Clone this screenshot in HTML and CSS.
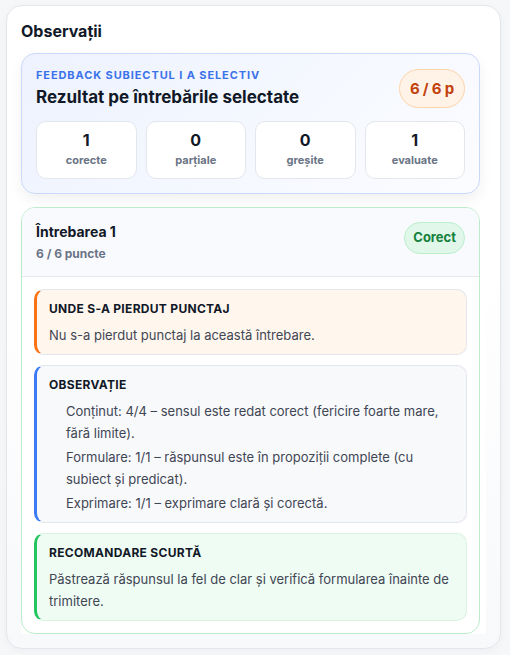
FILE: index.html
```html
<!DOCTYPE html>
<html lang="ro">
<head>
  <meta charset="UTF-8">
  <meta name="viewport" content="width=device-width, initial-scale=1.0">
  <title>Observații</title>
  <link rel="stylesheet" href="styles.css">
</head>
<body>
  <div class="card">
    <h2 class="card-title">Observații</h2>

    <div class="feed">
      <!-- rezumat -->
      <div class="summary">
        <div class="summary-head">
          <div>
            <div class="eyebrow">FEEDBACK SUBIECTUL I A SELECTIV</div>
            <div class="summary-title">Rezultat pe întrebările selectate</div>
          </div>
          <span class="pill pill-orange">6 / 6 p</span>
        </div>
        <div class="stats">
          <div class="stat"><div class="stat-num">1</div><div class="stat-label">corecte</div></div>
          <div class="stat"><div class="stat-num">0</div><div class="stat-label">parțiale</div></div>
          <div class="stat"><div class="stat-num">0</div><div class="stat-label">greșite</div></div>
          <div class="stat"><div class="stat-num">1</div><div class="stat-label">evaluate</div></div>
        </div>
      </div>

      <!-- intrebarea 1 -->
      <div class="question">
        <div class="question-head">
          <div>
            <div class="question-title">Întrebarea 1</div>
            <div class="question-score">6 / 6 puncte</div>
          </div>
          <span class="pill pill-green">Corect</span>
        </div>
        <div class="question-body">
          <div class="note note-orange">
            <div class="note-title">UNDE S-A PIERDUT PUNCTAJ</div>
            <p class="note-text">Nu s-a pierdut punctaj la această întrebare.</p>
          </div>
          <div class="note note-blue">
            <div class="note-title">OBSERVAȚIE</div>
            <ul class="note-list">
              <li>Conținut: 4/4 – sensul este redat corect (fericire foarte mare, fără limite).</li>
              <li>Formulare: 1/1 – răspunsul este în propoziții complete (cu subiect și predicat).</li>
              <li>Exprimare: 1/1 – exprimare clară și corectă.</li>
            </ul>
          </div>
          <div class="note note-green">
            <div class="note-title">RECOMANDARE SCURTĂ</div>
            <p class="note-text">Păstrează răspunsul la fel de clar și verifică formularea înainte de trimitere.</p>
          </div>
        </div>
      </div>
    </div>
  </div>
</body>
</html>
```

FILE: styles.css
```css
body {
  margin: 0;
  padding: 5px 9px 7px 6px;
  background: #f6f7f9;
  font-family: Inter, "Noto Sans", Arial, sans-serif;
  color: #111827;
}

.card {
  background: linear-gradient(180deg, #ffffff 0%, #ffffff 40%, #f8f9fb 100%);
  border: 1px solid #e3e6eb;
  border-radius: 16px;
  padding: 15px 14px 14px 14px;
  box-shadow: 0 2px 8px rgba(15, 23, 42, 0.04);
}

.card-title {
  margin: 0 0 12px 0;
  font-size: 16px;
  line-height: 20px;
  font-weight: 700;
  color: #111827;
}

.feed {
  background: #ffffff;
  padding-right: 6px;
  display: flex;
  flex-direction: column;
  gap: 13px;
}

.summary {
  border: 1px solid #c9d8fb;
  border-radius: 14px;
  background: linear-gradient(135deg, #edf2fe 0%, #f5f8ff 55%, #fbfcff 100%);
  padding: 14px 14px 14px 14px;
  box-shadow: 0 6px 14px rgba(15, 23, 42, 0.06);
}

.summary-head {
  display: flex;
  justify-content: space-between;
  align-items: center;
}

.eyebrow {
  font-size: 11px;
  line-height: 14px;
  font-weight: 700;
  letter-spacing: 0.9px;
  color: #3b72ea;
}

.summary-title {
  margin-top: 4px;
  font-size: 17px;
  line-height: 22px;
  font-weight: 700;
  color: #111827;
}

.pill {
  border-radius: 999px;
  font-weight: 700;
  white-space: nowrap;
}

.pill-orange {
  padding: 9px 10px;
  font-size: 15px;
  line-height: 19px;
  letter-spacing: -0.2px;
  background: #fff3e8;
  border: 1px solid #fdd3aa;
  color: #c2410c;
}

.pill-green {
  align-self: flex-start;
  padding: 6px 8px 7px;
  font-size: 13px;
  line-height: 17px;
  background: #e1f7ea;
  border: 1px solid #b9efcd;
  color: #15803d;
}

.stats {
  margin-top: 13px;
  display: grid;
  grid-template-columns: repeat(4, 1fr);
  gap: 9px;
}

.stat {
  background: #ffffff;
  border: 1px solid #e3e6eb;
  border-radius: 10px;
  padding: 8px 6px 11px;
  text-align: center;
}

.stat-num {
  font-size: 16px;
  line-height: 20px;
  font-weight: 700;
  color: #111827;
}

.stat-label {
  margin-top: 3px;
  font-size: 11px;
  line-height: 14px;
  font-weight: 700;
  color: #6b7486;
}

.question {
  border: 1px solid #bdeccd;
  border-radius: 14px;
  overflow: hidden;
  background: #ffffff;
}

.question-head {
  display: flex;
  justify-content: space-between;
  align-items: flex-start;
  padding: 14px 14px 14px 14px;
  background: #f9fafd;
  border-bottom: 1px solid #e6e8ee;
}

.question-title {
  margin-top: 1px;
  font-size: 14px;
  line-height: 18px;
  font-weight: 700;
  color: #111827;
}

.question-score {
  margin-top: 5px;
  font-size: 12px;
  line-height: 16px;
  font-weight: 700;
  color: #6b7486;
}

.question-body {
  padding: 12px 12px 12px 12px;
  display: flex;
  flex-direction: column;
  gap: 10px;
}

.note {
  border: 1px solid #e3e6eb;
  border-left: 3px solid;
  border-radius: 10px;
  padding: 11px 12px 8px 12px;
}

.note-orange {
  background: #fff6ee;
  border-left-color: #f97316;
}

.note-blue {
  background: #f8f9fb;
  border-left-color: #3b7bf6;
}

.note-green {
  background: #effcf3;
  border-color: #d9f2e1;
  border-left-color: #22c55e;
}

.note-title {
  font-size: 12px;
  line-height: 15px;
  font-weight: 700;
  letter-spacing: 0.3px;
  color: #111827;
  margin-bottom: 8px;
}

.note-text {
  margin: 0;
  font-size: 13px;
  line-height: 22px;
  color: #3f4654;
}

.note-list {
  margin: 0;
  padding-left: 17px;
  list-style: none;
  font-size: 13px;
  line-height: 22px;
  color: #3f4654;
}

.note-list li + li {
  margin-top: 2px;
}
```
